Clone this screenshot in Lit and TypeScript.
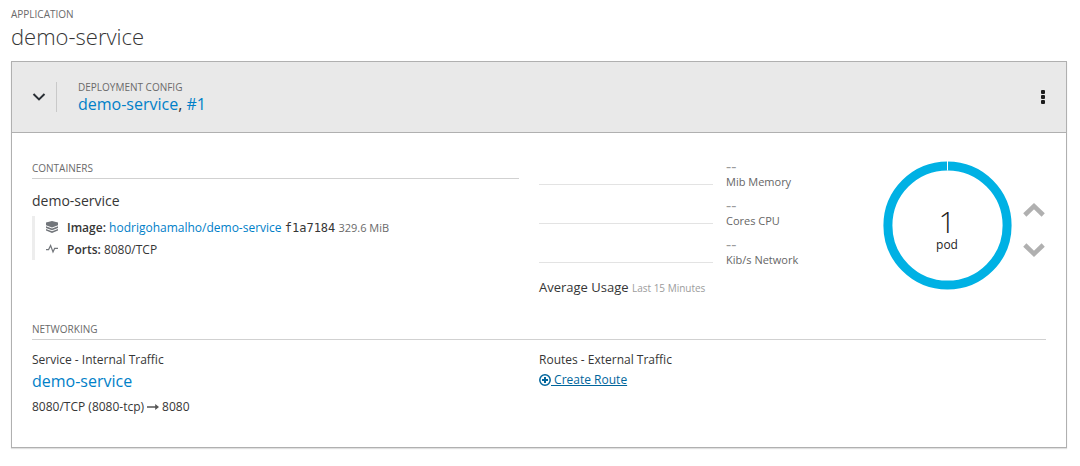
import { LitElement, html, css } from "lit";
import { customElement, property, state } from "lit/decorators.js";

@customElement("pod-donut")
class PodDonut extends LitElement {
  @property({ type: Number }) count = 1;

  static styles = css`
    :host {
      display: grid;
      place-items: center;
      color: #1d1d1d;
    }
    .ring,
    .label {
      grid-area: 1 / 1;
    }
    .ring {
      display: block;
      width: 130px;
      height: 130px;
    }
    .label {
      display: flex;
      flex-direction: column;
      align-items: center;
      padding-top: 11px;
    }
    .count {
      font-size: 30px;
      font-weight: 300;
      line-height: 28px;
    }
    .unit {
      font-size: 12px;
      line-height: 18px;
    }
  `;

  render() {
    return html`
      <svg class="ring" viewBox="0 0 130 130" aria-hidden="true">
        <circle cx="65.5" cy="65.5" r="59.6" fill="none" stroke="#00b1e4" stroke-width="9" />
        <path d="M65.5 0v10.5" stroke="#fff" stroke-width="1" />
      </svg>
      <div class="label">
        <span class="count">${this.count}</span>
        <span class="unit">pod</span>
      </div>
    `;
  }
}

@customElement("usage-metric")
class UsageMetric extends LitElement {
  @property() value = "--";
  @property() label = "";

  static styles = css`
    :host {
      display: grid;
      grid-template-columns: 174px 1fr;
      column-gap: 13px;
    }
    .spark {
      height: 26px;
      border-bottom: 1px solid #e3e3e3;
    }
    .value {
      color: #9c9c9c;
      font-size: 16px;
      line-height: 16px;
    }
    .name {
      color: #666;
      font-size: 11px;
      line-height: 16px;
    }
  `;

  render() {
    return html`
      <div class="spark"></div>
      <div>
        <div class="value">${this.value}</div>
        <div class="name">${this.label}</div>
      </div>
    `;
  }
}

@customElement("app-root")
class AppRoot extends LitElement {
  @state() private open = true;

  private metrics = ["Mib Memory", "Cores CPU", "Kib/s Network"];

  static styles = css`
    :host {
      display: block;
      box-sizing: border-box;
      padding: 6px 13px 18px 11px;
      background: #fff;
      color: #363636;
      font-family: "Open Sans", "Noto Sans", sans-serif;
      font-size: 12px;
      line-height: 20px;
    }
    h1,
    h2,
    h3,
    p,
    ul {
      margin: 0;
      padding: 0;
      font-weight: 400;
    }
    a {
      color: #0080c8;
      text-decoration: none;
    }
    button {
      display: flex;
      align-items: center;
      justify-content: center;
      margin: 0;
      padding: 0;
      border: 0;
      background: none;
      color: inherit;
      font: inherit;
      cursor: pointer;
    }
    svg {
      display: block;
    }
    .eyebrow {
      color: #6a6a6a;
      font-size: 10px;
      line-height: 16px;
      text-transform: uppercase;
    }
    .title {
      font-size: 22px;
      font-weight: 300;
      line-height: 28px;
      margin-bottom: 11px;
    }
    .card {
      border: 1px solid #b0b0b0;
      box-shadow: 0 1px 1px rgba(0, 0, 0, 0.12);
    }
    .header {
      display: flex;
      align-items: center;
      height: 70px;
      padding: 0 15px 0 20px;
      background: #e9e9e9;
      border-bottom: 1px solid #b0b0b0;
    }
    .toggle {
      height: 30px;
      padding-right: 10px;
      border-right: 1px solid #c9c9c9;
    }
    .config {
      flex: 1;
      padding: 0 0 2px 21px;
    }
    .link {
      font-size: 16px;
      line-height: 18px;
    }
    .menu {
      width: 16px;
      height: 24px;
      color: #1d1d1d;
    }
    .body {
      padding: 25px 20px 30px;
    }
    .columns {
      display: grid;
      grid-template-columns: 1fr 1fr;
    }
    .section {
      color: #6a6a6a;
      font-size: 10px;
      line-height: 20px;
      text-transform: uppercase;
      border-bottom: 1px solid #d1d1d1;
    }
    .overview {
      margin-bottom: 21px;
    }
    .containers {
      padding-right: 20px;
    }
    .name {
      font-size: 14px;
      line-height: 20px;
      margin: 12px 0 5px;
    }
    .facts {
      list-style: none;
      border-left: 3px solid #ededed;
    }
    .facts li {
      display: flex;
      align-items: center;
      height: 22px;
      padding-left: 11px;
      gap: 9px;
    }
    .facts svg {
      color: #72767b;
    }
    .fact {
      padding-top: 2px;
    }
    .facts b {
      font-weight: 600;
    }
    .hash {
      color: #363636;
      font-family: "DejaVu Sans Mono", monospace;
      font-size: 12px;
    }
    .size {
      color: #6a6a6a;
      font-size: 11px;
    }
    .usage {
      display: flex;
      justify-content: space-between;
    }
    .metrics {
      display: flex;
      flex-direction: column;
      gap: 7px;
      flex: 1;
    }
    .average {
      font-size: 13px;
      padding-top: 2px;
    }
    .average small {
      color: #9c9c9c;
      font-size: 10px;
    }
    .pods {
      display: flex;
      align-items: flex-start;
      gap: 10px;
      padding-top: 2px;
    }
    .scale {
      display: flex;
      flex-direction: column;
      gap: 16px;
      padding-top: 38px;
      color: #b0b0b0;
    }
    .scale button {
      width: 24px;
      height: 24px;
    }
    .network {
      padding-top: 10px;
    }
    .service {
      margin: 2px 0 7px;
    }
    .ports,
    .create {
      display: flex;
      align-items: center;
    }
    .ports {
      gap: 3px;
    }
    .create {
      display: inline-flex;
      color: #00659c;
    }
    .create span {
      text-decoration: underline;
      white-space: pre;
    }
  `;

  render() {
    return html`
      <div class="eyebrow">Application</div>
      <h1 class="title">demo-service</h1>
      <section class="card">
        <header class="header">
          <button
            class="toggle"
            aria-label="Toggle details"
            aria-expanded=${this.open}
            @click=${() => (this.open = !this.open)}
          >
            <svg width="14" height="10" viewBox="0 0 14 10" fill="none" stroke="#292e34" stroke-width="2">
              <path d="M1.5 2L7 7.4 12.5 2" />
            </svg>
          </button>
          <div class="config">
            <div class="eyebrow">Deployment Config</div>
            <h2 class="link"><a href="#config">demo-service</a>, <a href="#deployment">#1</a></h2>
          </div>
          <button class="menu" aria-label="Actions">
            <svg width="4" height="16" viewBox="0 0 4 16" fill="currentColor">
              <rect y="1" width="4" height="4" rx="1" />
              <rect y="6" width="4" height="4" rx="1" />
              <rect y="11" width="4" height="4" rx="1" />
            </svg>
          </button>
        </header>
        ${this.open ? this.renderBody() : ""}
      </section>
    `;
  }

  private renderBody() {
    return html`
      <div class="body">
        <div class="columns overview">
          <div class="containers">
            <h3 class="section">Containers</h3>
            <p class="name">demo-service</p>
            <ul class="facts">
              <li>
                <svg width="12" height="12" viewBox="0 0 12 12" fill="currentColor">
                  <path d="M6 0L12 1.6V4.2L6 6.4 0 4.2V1.6z" />
                  <path d="M0 5.2L6 7.4 12 5.2V6.9L6 9.2 0 6.9z" />
                  <path d="M0 7.9L6 10.2 12 7.9V9.6L6 12 0 9.6z" />
                </svg>
                <span class="fact"
                  ><b>Image:</b> <a href="#image">hodrigohamalho/demo-service</a>
                  <span class="hash">f1a7184</span> <span class="size">329.6 MiB</span></span
                >
              </li>
              <li>
                <svg width="12" height="12" viewBox="0 0 12 12" fill="none" stroke="currentColor" stroke-width="1.2">
                  <path d="M0 6.6H2.6L4.6 2.6 7 9 8.6 5.4H12" />
                </svg>
                <span class="fact"><b>Ports:</b> 8080/TCP</span>
              </li>
            </ul>
          </div>
          <div class="usage">
            <div class="metrics">
              ${this.metrics.map((m) => html`<usage-metric label=${m}></usage-metric>`)}
              <div class="average">Average Usage <small>Last 15 Minutes</small></div>
            </div>
            <div class="pods">
              <pod-donut .count=${1}></pod-donut>
              <div class="scale">
                <button aria-label="Scale up">
                  <svg width="24" height="16" viewBox="0 0 24 16" fill="none" stroke="currentColor" stroke-width="4.6">
                    <path d="M2.8 13L12 4.2 21.2 13" />
                  </svg>
                </button>
                <button aria-label="Scale down">
                  <svg width="24" height="16" viewBox="0 0 24 16" fill="none" stroke="currentColor" stroke-width="4.6">
                    <path d="M2.8 3L12 11.8 21.2 3" />
                  </svg>
                </button>
              </div>
            </div>
          </div>
        </div>
        <h3 class="section">Networking</h3>
        <div class="columns network">
          <div>
            <p>Service - Internal Traffic</p>
            <p class="link service"><a href="#service">demo-service</a></p>
            <p class="ports">
              8080/TCP (8080-tcp)
              <svg width="12" height="8" viewBox="0 0 12 8" fill="#555">
                <path d="M0 3.2H8.2V1L12 4 8.2 7V4.8H0z" />
              </svg>
              8080
            </p>
          </div>
          <div>
            <p>Routes - External Traffic</p>
            <a class="create" href="#route"
              ><svg width="12" height="12" viewBox="0 0 12 12" fill="none" stroke="currentColor">
                <circle cx="6" cy="6" r="5.2" stroke-width="1.5" />
                <path d="M6 3V9M3 6H9" stroke-width="2" /></svg
              ><span> Create Route</span></a
            >
          </div>
        </div>
      </div>
    `;
  }
}
